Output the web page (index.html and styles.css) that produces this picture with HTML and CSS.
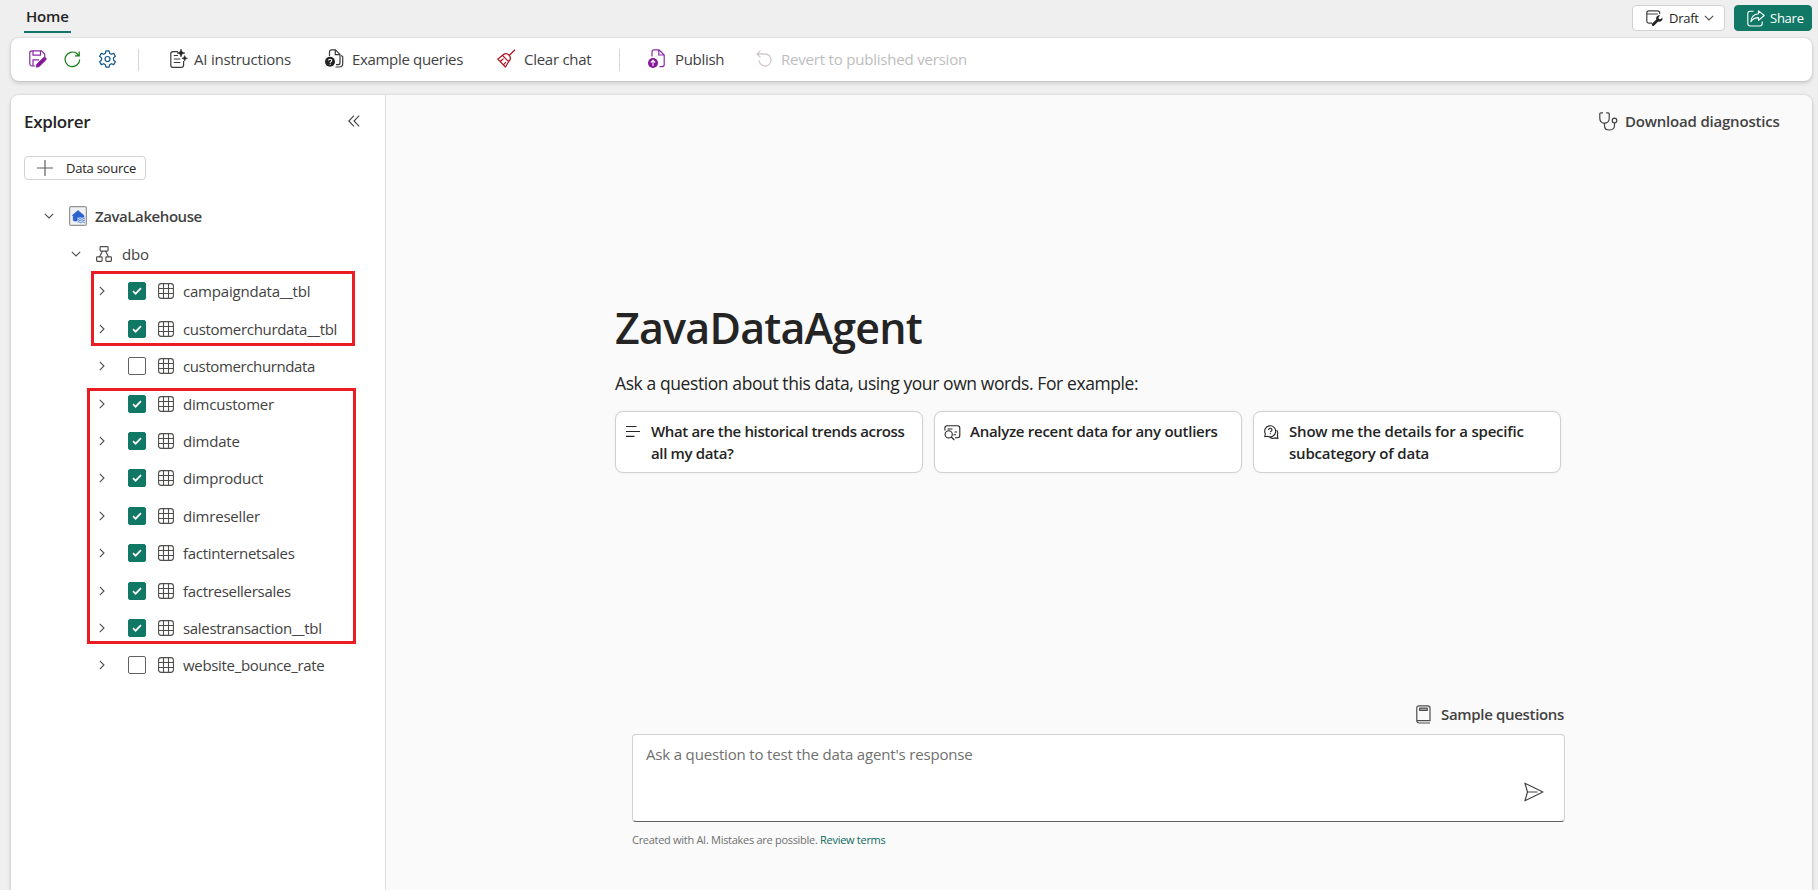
FILE: index.html
```html
<!DOCTYPE html>
<html lang="en">
<head>
<meta charset="utf-8">
<title>ZavaDataAgent</title>
<link rel="stylesheet" href="styles.css">
</head>
<body>
<svg class="defs" width="0" height="0" aria-hidden="true">
  <symbol id="grid" viewBox="0 0 16 16"><g fill="none" stroke="#504e4d" stroke-width="1.1"><rect x=".6" y=".6" width="14.8" height="14.8" rx="2.6"/><path d="M5.5.6v14.8M10.5.6v14.8M.6 5.5h14.8M.6 10.5h14.8"/></g></symbol>
  <symbol id="right" viewBox="0 0 6 10"><path d="M.8.8 5 5 .8 9.2" fill="none" stroke="#504e4d" stroke-width="1.1"/></symbol>
  <symbol id="down" viewBox="0 0 10 6"><path d="M.8.8 5 5 9.2.8" fill="none" stroke="#504e4d" stroke-width="1.1"/></symbol>
  <symbol id="tick" viewBox="0 0 10 8"><path d="M1 4.200 3.600 6.700 9 1.200" fill="none" stroke="#fff" stroke-width="1.700"/></symbol>
</svg>

<header class="top">
  <div class="tab">Home</div>
  <div class="top-actions">
    <button class="btn draft">
      <svg width="17" height="17" viewBox="0 0 17 17"><path d="M6 13.2H3A2.2 2.2 0 0 1 .8 11V3A2.2 2.2 0 0 1 3 .8h8.500A2.200 2.200 0 0 1 13.700 3v1M.8 4h11" fill="none" stroke="#424242" stroke-width="1.2"/><path d="M6.200 13.600 10.300 9.600a3.200 3.200 0 0 1 3.900-4.200L12.500 7.200l.4 1.700 1.700.4 1.800-1.700a3.200 3.200 0 0 1-4.200 3.900L8.200 15.600a1.400 1.400 0 0 1-2-2z" fill="#242424"/></svg>
      <span class="t-draft">Draft</span>
      <svg width="10" height="6"><use href="#down"/></svg>
    </button>
    <button class="btn share">
      <svg width="18" height="17" viewBox="0 0 18 17" fill="none" stroke="#fff" stroke-width="1.1" stroke-linejoin="round"><path d="M6.500 1.200H3.200A2.400 2.400 0 0 0 .8 3.600v10a2.400 2.400 0 0 0 2.400 2.400h9.600a2.400 2.400 0 0 0 2.400-2.400v-2"/><path d="M11.500.8 17.200 5.500l-5.700 4.800V7.600c-3.600 0-5.800 1.300-7.600 4 .3-4.500 2.800-7.400 7.600-7.900z"/></svg>
      <span class="t-share">Share</span>
    </button>
  </div>
</header>

<nav class="toolbar">
  <svg class="tool" width="18" height="18" viewBox="0 0 18 18" fill="none" stroke="#8c2aa6" stroke-width="1.2"><path d="M6 16H3A2.200 2.200 0 0 1 .8 13.800V3A2.200 2.200 0 0 1 3 .8h9.500L15.700 4v3"/><path d="M4 .8v4.400h7.500V.8M4 16v-6.200h6"/><path d="M7.800 14.200 14.300 7.800a1.600 1.600 0 0 1 2.400 2.300L10.200 16.500l-3.100.7z" fill="#881798" stroke="#881798" stroke-width=".8"/></svg>
  <svg class="tool" width="17" height="17" viewBox="0 0 17 17" fill="none" stroke="#107c10" stroke-width="1.200"><path d="M15.700 8.500A7.300 7.300 0 1 1 12.500 2.300L15 4.700M15.200.6v4.200H11"/></svg>
  <svg class="tool" width="19" height="19" viewBox="0 0 19 19" fill="none" stroke="#0f548c" stroke-width="1.200" stroke-linejoin="round"><path d="M7.900.8h3.200l.5 2.500 1.700 1 2.400-.9 1.700 2.800-1.900 1.700v2.200l1.900 1.700-1.700 2.800-2.400-.9-1.700 1-.5 2.500H7.900l-.5-2.500-1.700-1-2.400.9-1.700-2.800 1.900-1.700V7.900L1.600 6.200l1.700-2.800 2.400.9 1.700-1z"/><circle cx="9.500" cy="9" r="2.500"/></svg>
  <i class="sep"></i>
  <span class="tool-item">
    <svg width="18" height="20" viewBox="0 0 18 20"><g fill="none" stroke="#3b3a39" stroke-width="1.200"><path d="M8 2.600H3A2.200 2.200 0 0 0 .8 4.800v11.400A2.200 2.200 0 0 0 3 18.400h8.400a2.200 2.200 0 0 0 2.200-2.200V12M3.800 6.500H8M3.800 10h6.500M3.800 13.500h6.500"/></g><path d="m11 0 1.100 2.900L15 4l-2.900 1.100L11 8 9.900 5.100 7 4l2.900-1.100zM14.700 6.500l.8 2 2 .8-2 .8-.8 2-.8-2-2-.8 2-.8z" fill="#242424" stroke="#242424" stroke-width=".5"/></svg>
    <span class="t-ai">AI instructions</span></span>
  <span class="tool-item">
    <svg width="19" height="19" viewBox="0 0 19 19"><g fill="none" stroke="#3b3a39" stroke-width="1.200"><path d="M4.500 7V2.800a2 2 0 0 1 2-2h4l4.500 4.600v8.300a2 2 0 0 1-2 2h-2M10.300.8v4.800H15M16.300 6.300l1.400 1.500v7a3.200 3.200 0 0 1-3.200 3.200h-4"/></g><circle cx="5" cy="12.700" r="5" fill="#242424"/><path d="M3.500 11.600c0-1.900 3.200-1.900 3.200 0 0 1.200-1.600 1.300-1.600 2.300M5.100 14.700v1" fill="none" stroke="#fff" stroke-width="1.100"/></svg>
    <span class="t-ex">Example queries</span></span>
  <span class="tool-item">
    <svg width="19" height="19" viewBox="0 0 19 19" fill="none" stroke="#b10e1c" stroke-width="1.200" stroke-linejoin="round"><path d="m18 .8-5.800 5.700M5.500 6.300c2-2.300 4.600-2.300 6.500-.2s1.800 4.500-.4 6.600zM5.500 6.300.8 10.200 8.500 18l3.100-5.300M6.400 15.800 9 13.200M3.200 12.500 6.500 9.600"/></svg>
    <span class="t-clear">Clear chat</span></span>
  <i class="sep"></i>
  <span class="tool-item">
    <svg width="18" height="19" viewBox="0 0 18 19"><g fill="none" stroke="#8c2aa6" stroke-width="1.200"><path d="M4 7.500V2.800a2 2 0 0 1 2-2h5l5.200 5.200v9.600a2 2 0 0 1-2 2H11.500M10.800.8v5.200h5.400"/></g><circle cx="5" cy="14" r="5" fill="#881798"/><path d="M5 17v-5.500M2.800 13.500 5 11.300l2.200 2.200" fill="none" stroke="#fff" stroke-width="1.100"/></svg>
    <span class="t-pub">Publish</span></span>
  <span class="tool-item off">
    <svg width="17" height="17" viewBox="0 0 17 17" fill="none" stroke="#d3c9cc" stroke-width="1.300"><path d="M1 4h8.200a6 6 0 1 1-6.100 6.500M4.500.6 1 4l3.500 3.500"/></svg>
    <span class="t-rev">Revert to published version</span></span>
</nav>

<div class="workspace">
  <aside class="explorer">
    <div class="ex-head"><h2>Explorer</h2>
      <svg width="12" height="12" viewBox="0 0 12 12" fill="none" stroke="#424242" stroke-width="1.100"><path d="M6 .6.800 6 6 11.400M11.200.6 6 6l5.200 5.400"/></svg>
    </div>
    <button class="btn source"><svg width="16" height="16" viewBox="0 0 16 16"><path d="M8 0v16M0 8h16" stroke="#616161" stroke-width="1.200"/></svg><span class="t-src">Data source</span></button>

    <div class="tree">
      <div class="row lake"><svg width="10" height="6"><use href="#down"/></svg>
        <svg class="house" width="18" height="20" viewBox="0 0 18 20"><rect x=".6" y=".6" width="16.800" height="18.800" rx="1.500" fill="#eef1f6" stroke="#949494" stroke-width="1.200"/><path d="M9 4.500 3.200 9.500h1v4.300a1.200 1.200 0 0 0 1.200 1.200H8V11h7V9.500z" fill="#2b62d0" stroke="#2b62d0" stroke-width=".6" stroke-linejoin="round"/><path d="M8 12q1-.9 2 0t2 0 2 0 2 0M8 14.100q1-.9 2 0t2 0 2 0 2 0M8.500 16.200q1-.9 2 0t2 0 2 0 1.500 0" fill="none" stroke="#3f74d8" stroke-width="1"/></svg>
        <b class="t-lake">ZavaLakehouse</b></div>
      <div class="row schema"><svg width="10" height="6"><use href="#down"/></svg>
        <svg class="dbo" width="16" height="16" viewBox="0 0 16 16" fill="none" stroke="#504e4d" stroke-width="1.200"><rect x="4.100" y=".6" width="8" height="4.500" rx=".8"/><rect x=".6" y="10.900" width="5.500" height="4.500" rx=".8"/><rect x="9.900" y="10.900" width="5.500" height="4.500" rx=".8"/><path d="M6.500 5 3.500 11M9.500 5l3 6"/></svg>
        <span>dbo</span></div>
      <div class="tables">
        <div class="row"><svg class="arr"><use href="#right"/></svg><i class="check on"><svg width="10" height="8"><use href="#tick"/></svg></i><svg class="tbl"><use href="#grid"/></svg><span class="n1">campaigndata__tbl</span></div>
        <div class="row"><svg class="arr"><use href="#right"/></svg><i class="check on"><svg width="10" height="8"><use href="#tick"/></svg></i><svg class="tbl"><use href="#grid"/></svg><span class="n2">customerchurdata__tbl</span></div>
        <div class="row"><svg class="arr"><use href="#right"/></svg><i class="check"></i><svg class="tbl"><use href="#grid"/></svg><span class="n3">customerchurndata</span></div>
        <div class="row"><svg class="arr"><use href="#right"/></svg><i class="check on"><svg width="10" height="8"><use href="#tick"/></svg></i><svg class="tbl"><use href="#grid"/></svg><span class="n4">dimcustomer</span></div>
        <div class="row"><svg class="arr"><use href="#right"/></svg><i class="check on"><svg width="10" height="8"><use href="#tick"/></svg></i><svg class="tbl"><use href="#grid"/></svg><span class="n5">dimdate</span></div>
        <div class="row"><svg class="arr"><use href="#right"/></svg><i class="check on"><svg width="10" height="8"><use href="#tick"/></svg></i><svg class="tbl"><use href="#grid"/></svg><span class="n6">dimproduct</span></div>
        <div class="row"><svg class="arr"><use href="#right"/></svg><i class="check on"><svg width="10" height="8"><use href="#tick"/></svg></i><svg class="tbl"><use href="#grid"/></svg><span class="n7">dimreseller</span></div>
        <div class="row"><svg class="arr"><use href="#right"/></svg><i class="check on"><svg width="10" height="8"><use href="#tick"/></svg></i><svg class="tbl"><use href="#grid"/></svg><span class="n8">factinternetsales</span></div>
        <div class="row"><svg class="arr"><use href="#right"/></svg><i class="check on"><svg width="10" height="8"><use href="#tick"/></svg></i><svg class="tbl"><use href="#grid"/></svg><span class="n9">factresellersales</span></div>
        <div class="row"><svg class="arr"><use href="#right"/></svg><i class="check on"><svg width="10" height="8"><use href="#tick"/></svg></i><svg class="tbl"><use href="#grid"/></svg><span class="n10">salestransaction__tbl</span></div>
        <div class="row"><svg class="arr"><use href="#right"/></svg><i class="check"></i><svg class="tbl"><use href="#grid"/></svg><span class="n11">website_bounce_rate</span></div>
        <div class="mark mark-a"></div>
        <div class="mark mark-b"></div>
      </div>
    </div>
  </aside>

  <main class="agent">
    <div class="diag">
      <svg width="19" height="19" viewBox="0 0 19 19" fill="none" stroke="#424242" stroke-width="1.200"><path d="M4 .8H2A1.200 1.200 0 0 0 .8 2v4.500a4.700 4.700 0 0 0 9.400 0V2A1.200 1.200 0 0 0 9 .8H7.200M5.500 11.200v2.500c0 2.600 1.800 4.300 4.700 4.300s5.300-1.700 5.300-4.500v-2.600"/><circle cx="15.500" cy="8.500" r="2.300"/></svg>
      <b class="t-diag">Download diagnostics</b>
    </div>
    <section class="intro">
      <h1><span>ZavaDataAgent</span></h1>
      <p><span>Ask a question about this data, using your own words. For example:</span></p>
      <div class="cards">
        <div class="card"><svg width="14" height="12" viewBox="0 0 14 12"><path d="M0 1.500h10.500M0 6.500h14M0 11.400h8.500" stroke="#242424" stroke-width="1.100"/></svg><b class="c1">What are the historical trends across<br>all my data?</b></div>
        <div class="card narrow"><svg width="17" height="16" viewBox="0 0 17 16" fill="none" stroke="#242424" stroke-width="1.100"><path d="M.9 5.500V3A2.200 2.200 0 0 1 3.100.8h10.500A2.200 2.200 0 0 1 15.800 3v7.500a2.200 2.200 0 0 1-2.200 2.200H11M3.500 4h5M10.500 7h2.600M9.500 9.700h2.500"/><circle cx="4.700" cy="9.400" r="3.600"/><path d="m7.300 12 3 3"/></svg><b class="c2">Analyze recent data for any outliers</b></div>
        <div class="card"><svg width="15" height="15" viewBox="0 0 15 15" fill="none" stroke="#242424" stroke-width="1.100"><path d="M.8 11.700 1.300 8.800A5.500 5.500 0 1 1 3.700 11.200zM12.700 5a5.500 5.500 0 0 1 .7 5l.5 3.300-3-.4a6 6 0 0 1-5.200-.4"/><path d="M4.600 5c0-2.300 3.500-2.200 3.400 0-.1 1.200-1.700 1.200-1.700 2.300M6.300 8.300v1"/></svg><b class="c3">Show me the details for a specific<br>subcategory of data</b></div>
      </div>
    </section>
    <section class="ask">
      <div class="sample">
        <svg width="15" height="19" viewBox="0 0 15 19" fill="none" stroke="#504e4d" stroke-width="1.200"><path d="M14 18H3.200a2.300 2.300 0 0 1-2.400-2.300V3A2.200 2.200 0 0 1 3 .8h8.800A2.200 2.200 0 0 1 14 3v12.700H.8"/><path d="M3.700 3.200h7.500v2.200H3.700z" fill="#bbb"/></svg>
        <b class="t-sample">Sample questions</b>
      </div>
      <div class="prompt"><span class="t-ask">Ask a question to test the data agent's response</span>
        <svg width="20" height="20" viewBox="0 0 20 20" fill="none" stroke="#424242" stroke-width="1.200" stroke-linejoin="round"><path d="M.9 1.200 18.900 10 .9 18.800 3.500 10zM3.500 10h10"/></svg>
      </div>
      <div class="note"><span class="t-note">Created with AI. Mistakes are possible.</span> <a class="t-terms">Review terms</a></div>
    </section>
  </main>
</div>
</body>
</html>
```

FILE: styles.css
```css
* { box-sizing: border-box; }
body {
  margin: 0;
  width: 1818px;
  height: 890px;
  overflow: hidden;
  background: #efefef;
  color: #424242;
  font: 15px/20px "Open Sans", "Noto Sans", sans-serif;
  letter-spacing: -0.2px;
}
svg { display: block; flex: none; }
.defs { position: absolute; }
span, b, a { white-space: nowrap; }
b { font-weight: 600; }
button { font-family: inherit; }

.top { display: flex; justify-content: space-between; height: 38px; padding: 0 6px 0 24px; }
.tab { width: 47px; height: 33px; padding: 6px 0 0 2px; border-bottom: 2px solid #117865; font-weight: 600; color: #242424; }
.top-actions { display: flex; gap: 9px; padding-top: 5px; }
.btn { display: flex; align-items: center; height: 26px; padding: 0; border: 1px solid #d1d1d1; border-radius: 4px; background: #fff; color: #242424; font-size: 13px; letter-spacing: -0.25px; }
.draft { width: 93px; padding-left: 13px; }
.draft span { width: 35px; margin-left: 6px; text-align: left; }
.share { width: 78px; padding-left: 12px; background: #117865; border-color: #117865; color: #fff; }
.share span { margin-left: 5px; }

.toolbar {
  display: grid;
  grid-template-columns: 35px 34px 40px 32px 155px 172px 122px 29px 108px 1fr;
  align-items: center;
  height: 43px;
  width: 1801px;
  margin-left: 11px;
  padding-left: 18px;
  background: #fff;
  border-radius: 8px;
  box-shadow: 0 0 2px rgba(0,0,0,.14), 0 2px 4px rgba(0,0,0,.16);
}
.toolbar > svg { margin-top: -1px; }
.sep { width: 1px; height: 22px; background: #d6d6d6; }
.tool-item { display: flex; align-items: center; margin-top: -2px; }
.tool-item span { margin-left: 8px; }
.tool-item .t-ai { margin-left: 6px; }
.tool-item .t-ex { letter-spacing: -0.33px; }
.tool-item .t-clear { letter-spacing: -0.27px; }
.tool-item .t-pub { margin-left: 9px; letter-spacing: -0.3px; }
.off { color: #bdbdbd; }

.workspace {
  display: flex;
  width: 1801px;
  height: 795px;
  margin: 14px 0 0 11px;
  border-radius: 8px 8px 0 0;
  box-shadow: 0 0 2px rgba(0,0,0,.18), 0 2px 4px rgba(0,0,0,.16);
  overflow: hidden;
}
.explorer { width: 375px; background: #fff; border-right: 1px solid #dcdcdc; }
.ex-head { display: flex; align-items: center; justify-content: space-between; height: 52px; padding: 0 25px 0 13px; }
h2 { margin: 2px 0 0; font-size: 17px; font-weight: 600; letter-spacing: -0.35px; color: #242424; }
.source { width: 122px; height: 24px; margin: 9px 0 0 13px; padding-left: 12px; }
.source span { margin-left: 13px; }
.tree { margin-top: 18px; }
.row { display: flex; align-items: center; height: 37.4px; }
.lake { padding: 0 0 2px 33px; }
.house { margin: 0 8px 0 15px; }
.t-lake { letter-spacing: -0.42px; }
.schema { padding-left: 60px; }
.dbo { margin: 0 10px 0 15px; }
.tables { position: relative; }
.tables .row { padding-left: 88px; }
.arr { width: 6px; height: 10px; }
.check { width: 18px; height: 18px; margin-left: 23px; border: 1px solid #616161; border-radius: 2px; background: #fff; }
.on { display: grid; place-items: center; background: #117865; border-color: #117865; }
.tbl { width: 16px; height: 16px; margin: 0 9px 0 12px; }
.n2, .n10, .n11 { letter-spacing: -0.32px; }
.n3 { letter-spacing: -0.38px; }
.n8, .n9 { letter-spacing: -0.3px; }
.mark { position: absolute; border: 3px solid #ec1c24; }
.mark-a { left: 80px; top: -2px; width: 264px; height: 75px; }
.mark-b { left: 76px; top: 115px; width: 269px; height: 256px; }

.agent { flex: 1; display: flex; flex-direction: column; background: #fafafa; }
.diag { display: flex; align-items: center; height: 52px; padding-left: 1213px; }
.diag b { margin-left: 7px; }
.intro { margin: 151px 0 0 229px; color: #242424; }
h1 { margin: 0; font-size: 43px; line-height: 60px; font-weight: 600; letter-spacing: -0.8px; }
p { margin: 13px 0 0; font-size: 17.5px; line-height: 24px; letter-spacing: -0.41px; }
.cards { display: flex; gap: 11px; margin-top: 16px; }
.card { display: flex; align-items: flex-start; width: 308px; height: 62px; padding: 8px 0 0 10px; border: 1px solid #d1d1d1; border-radius: 8px; background: #fff; box-shadow: 0 0 2px rgba(0,0,0,.08); }
.narrow { padding-left: 9px; }
.card svg { margin-top: 5px; }
.card b { line-height: 22px; width: 271px; margin-left: auto; }
.c1 { letter-spacing: -0.35px; }
.c2 { letter-spacing: -0.28px; }
.ask { width: 933px; margin: 230px 0 0 246px; }
.sample { display: flex; justify-content: flex-end; align-items: center; height: 22px; gap: 10px; padding-right: 1px; }
.t-sample { letter-spacing: -0.33px; }
.prompt { display: flex; justify-content: space-between; height: 88px; margin-top: 9px; padding: 9px 20px 0 13px; border: 1px solid #d1d1d1; border-bottom-color: #616161; border-radius: 4px; background: #fff; color: #707070; letter-spacing: -0.17px; }
.prompt svg { margin-top: 38px; }
.note { margin-top: 8px; font-size: 11px; letter-spacing: -0.29px; color: #707070; }
.note a { color: #0c695a; }
```
